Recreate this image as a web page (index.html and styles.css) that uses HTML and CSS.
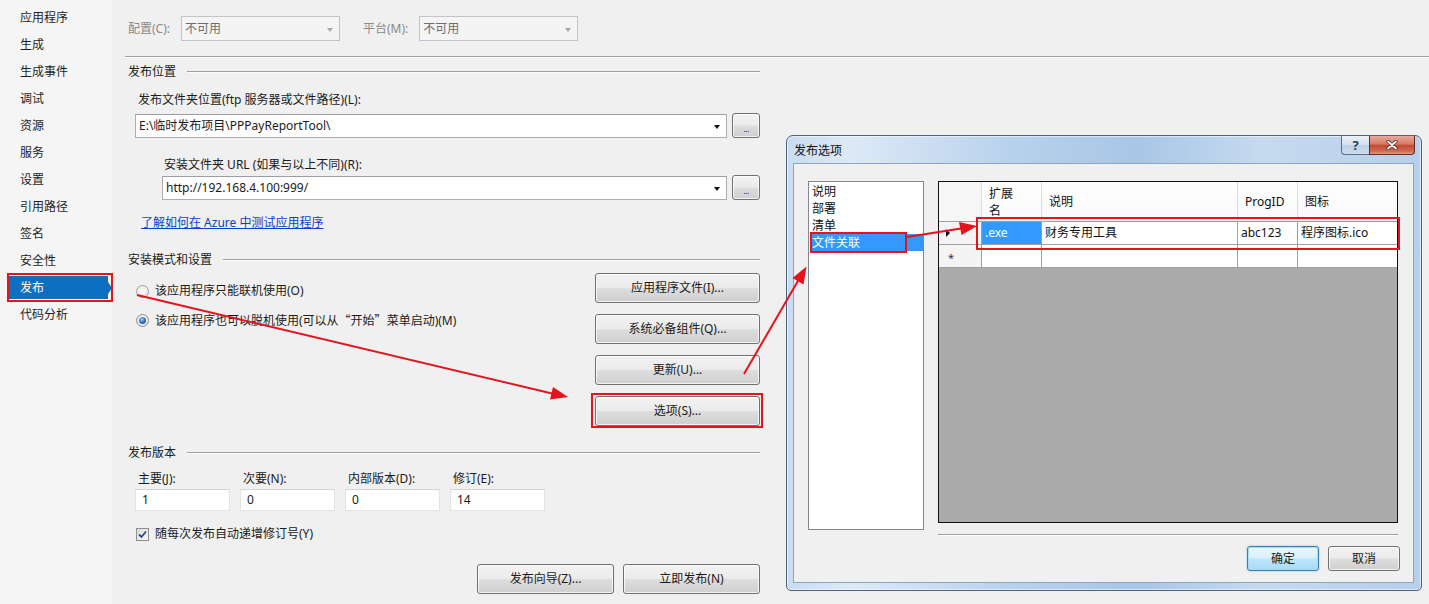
FILE: index.html
```html
<!DOCTYPE html>
<html lang="zh-CN">
<head>
<meta charset="utf-8">
<title>发布</title>
<link rel="stylesheet" href="styles.css">
</head>
<body>
<div class="page">
  <nav class="sidebar">
    <div class="nav-item">应用程序</div>
    <div class="nav-item">生成</div>
    <div class="nav-item">生成事件</div>
    <div class="nav-item">调试</div>
    <div class="nav-item">资源</div>
    <div class="nav-item">服务</div>
    <div class="nav-item">设置</div>
    <div class="nav-item">引用路径</div>
    <div class="nav-item">签名</div>
    <div class="nav-item">安全性</div>
    <div class="nav-item active">发布</div>
    <div class="nav-item">代码分析</div>
  </nav>

  <main class="main">
    <div class="toolbar">
      <span class="tb-label">配置(C):</span>
      <div class="combo combo-disabled tb-combo"><span class="combo-text">不可用</span><span class="caret"></span></div>
      <span class="tb-label tb-label-2">平台(M):</span>
      <div class="combo combo-disabled tb-combo"><span class="combo-text">不可用</span><span class="caret"></span></div>
    </div>
    <div class="etched"></div>

    <div class="content">
      <div class="group-head head-location"><span>发布位置</span><i class="group-line"></i></div>
      <div class="field-label label-folder">发布文件夹位置(ftp 服务器或文件路径)(L):</div>
      <div class="path-row row-folder">
        <div class="combo path-combo"><span class="combo-text">E:\临时发布项目\PPPayReportTool\</span><span class="caret"></span></div>
        <div class="btn btn-browse">...</div>
      </div>
      <div class="field-label label-url">安装文件夹 URL (如果与以上不同)(R):</div>
      <div class="path-row row-url">
        <div class="combo path-combo"><span class="combo-text">http://192.168.4.100:999/</span><span class="caret"></span></div>
        <div class="btn btn-browse">...</div>
      </div>
      <a class="link">了解如何在 Azure 中测试应用程序</a>

      <div class="group-head head-install"><span>安装模式和设置</span><i class="group-line"></i></div>
      <div class="install">
        <div class="radios">
          <div class="radio-row"><span class="radio"></span><span>该应用程序只能联机使用(O)</span></div>
          <div class="radio-row"><span class="radio checked"></span><span>该应用程序也可以脱机使用(可以从<span class="cjk">“开始”</span>菜单启动)(M)</span></div>
        </div>
        <div class="side-buttons">
          <div class="btn btn-side">应用程序文件(I)...</div>
          <div class="btn btn-side">系统必备组件(Q)...</div>
          <div class="btn btn-side">更新(U)...</div>
          <div class="btn btn-side">选项(S)...</div>
        </div>
      </div>

      <div class="group-head head-version"><span>发布版本</span><i class="group-line"></i></div>
      <div class="versions">
        <div class="ver-col"><span class="ver-label">主要(J):</span><div class="textbox">1</div></div>
        <div class="ver-col"><span class="ver-label">次要(N):</span><div class="textbox">0</div></div>
        <div class="ver-col"><span class="ver-label">内部版本(D):</span><div class="textbox">0</div></div>
        <div class="ver-col"><span class="ver-label">修订(E):</span><div class="textbox">14</div></div>
      </div>
      <div class="check-row">
        <span class="checkbox"><svg viewBox="0 0 9 9" width="9" height="9"><path d="M1 4.5 L3.5 7 L8 1.5" fill="none" stroke="#2c4a85" stroke-width="1.8"/></svg></span>
        <span>随每次发布自动递增修订号(Y)</span>
      </div>
      <div class="bottom-buttons">
        <div class="btn btn-bottom">发布向导(Z)...</div>
        <div class="btn btn-bottom">立即发布(N)</div>
      </div>
    </div>
  </main>

  <div class="dialog">
    <div class="dlg-title">
      <span class="dlg-caption">发布选项</span>
      <div class="dlg-ctrls">
        <span class="cap-btn cap-help">?</span>
        <span class="cap-btn cap-close"><svg viewBox="0 0 12 10" width="12" height="10"><path d="M2 1.5 L10 8.5 M10 1.5 L2 8.5" stroke="#4a2a28" stroke-width="3.4" stroke-linecap="round"/><path d="M2 1.5 L10 8.5 M10 1.5 L2 8.5" stroke="#ffffff" stroke-width="1.8" stroke-linecap="round"/></svg></span>
      </div>
    </div>
    <div class="dlg-client">
      <ul class="cat-list">
        <li>说明</li>
        <li>部署</li>
        <li>清单</li>
        <li class="selected">文件关联</li>
      </ul>
      <div class="dlg-right">
        <div class="grid">
          <div class="gh gh-corner"></div>
          <div class="gh">扩展<br>名</div>
          <div class="gh">说明</div>
          <div class="gh">ProgID</div>
          <div class="gh gh-last">图标</div>

          <div class="rh"><span class="row-arrow"></span></div>
          <div class="gc gc-selected">.exe</div>
          <div class="gc">财务专用工具</div>
          <div class="gc">abc123</div>
          <div class="gc gc-last">程序图标.ico</div>

          <div class="rh"><span class="row-star">*</span></div>
          <div class="gc"></div>
          <div class="gc"></div>
          <div class="gc"></div>
          <div class="gc gc-last"></div>
        </div>
        <div class="dlg-sep"></div>
        <div class="dlg-buttons">
          <div class="btn btn-dlg btn-default">确定</div>
          <div class="btn btn-dlg">取消</div>
        </div>
      </div>
    </div>
  </div>

  <svg class="annotations" width="1429" height="604" viewBox="0 0 1429 604">
    <g fill="none" stroke="#e5131d" stroke-width="2">
      <rect x="8" y="274" width="104" height="27"/>
      <rect x="592" y="394" width="170" height="33"/>
      <rect x="811" y="233" width="95" height="19"/>
      <rect x="977" y="218" width="422" height="31"/>
      <line x1="137" y1="295" x2="552" y2="393.5"/>
      <line x1="744" y1="374" x2="798.5" y2="280"/>
      <line x1="907" y1="237" x2="961" y2="228.4"/>
    </g>
    <g fill="#e5131d">
      <polygon points="568,397 550,399.5 553,387"/>
      <polygon points="806.5,266.5 803.5,284.5 792.5,278"/>
      <polygon points="977,226 961.5,235 959,222"/>
    </g>
  </svg>
</div>
</body>
</html>
```

FILE: styles.css
```css
* { box-sizing: border-box; margin: 0; padding: 0; }
html, body { width: 1429px; height: 604px; overflow: hidden; }
body {
  font-family: "Noto Sans", "Noto Sans CJK SC", sans-serif;
  font-size: 12px;
  line-height: 16px;
  color: #1b1b1b;
  background: #f0f0f0;
}
.page { position: relative; display: flex; width: 1429px; height: 604px; }
.cjk { font-family: "Noto Sans CJK SC", sans-serif; }

/* ---------- sidebar ---------- */
.sidebar { width: 112px; flex: none; background: #f5f5f5; padding-top: 6px; }
.nav-item {
  position: relative;
  width: 99px; height: 23px; line-height: 23px;
  margin: 0 0 4px 9px; padding-left: 11px;
  color: #1e1e1e;
}
.nav-item.active { background: #0d6fc2; color: #fff; }
.nav-item.active::after {
  content: ""; position: absolute; right: -4px; top: 6px;
  border-left: 4px solid #0d6fc2; border-top: 6px solid transparent; border-bottom: 6px solid transparent;
}

/* ---------- main ---------- */
.main { flex: 1; display: flex; flex-direction: column; }
.toolbar { display: flex; align-items: center; padding: 16px 0 0 16px; height: 41px; }
.tb-label { color: #8a8a8a; margin-right: 11px; }
.tb-label-2 { margin-left: 23px; }
.tb-combo { width: 159px; height: 25px; }

.combo {
  position: relative; display: flex; align-items: center;
  background: #fff; border: 1px solid #abadb3; border-top-color: #9a9ea6;
  padding-left: 3px;
}
.combo-disabled { background: #f4f4f4; border-color: #c2c4c6; }
.combo-disabled .combo-text { color: #6d6d6d; }
.combo-text { white-space: nowrap; }
.caret {
  position: absolute; right: 6px; top: 50%; margin-top: -1px;
  border-top: 4px solid #111; border-left: 3.5px solid transparent; border-right: 3.5px solid transparent;
}
.combo-disabled .caret { border-top-color: #a8a8a8; }

.etched { height: 2px; margin: 15px 0 0 13px; border-top: 1px solid #a0a0a0; border-bottom: 1px solid #fff; }

.content { width: 632px; margin-left: 16px; display: flex; flex-direction: column; }

.group-head { display: flex; align-items: center; height: 16px; }
.group-line { flex: 1; margin-left: 11px; height: 2px; border-top: 1px solid #a0a0a0; border-bottom: 1px solid #fcfcfc; }
.head-location { margin-top: 6px; }
.head-install { margin-top: 21px; }
.head-version { margin-top: 19px; }

.field-label { height: 16px; }
.label-folder { margin: 12px 0 0 10px; }
.label-url { margin: 19px 0 0 36px; }

.path-row { display: flex; align-items: center; gap: 5px; height: 25px; }
.row-folder { margin: 5px 0 0 7px; }
.row-url { margin: 2px 0 0 34px; }
.path-combo { flex: 1; height: 24px; }

.btn {
  display: flex; align-items: center; justify-content: center;
  border: 1px solid #707070; border-radius: 3px;
  background: linear-gradient(#f2f2f2 0%, #ebebeb 48%, #dddddd 52%, #cfcfcf 100%);
  box-shadow: inset 0 0 0 1px rgba(255,255,255,0.75);
  color: #1b1b1b; white-space: nowrap;
}
.btn-browse { width: 28px; height: 25px; font-size: 9px; line-height: 9px; padding-top: 5px; letter-spacing: -0.5px; color: #333; }

.link { margin: 15px 0 0 13px; height: 16px; color: #0a3fd0; text-decoration: underline; }

.install { display: flex; margin-top: 5px; }
.radios { flex: 1; display: flex; flex-direction: column; gap: 13px; padding: 10px 0 0 8px; }
.radio-row { display: flex; align-items: center; height: 16px; gap: 6px; }
.radio {
  position: relative; flex: none; width: 13px; height: 13px; border-radius: 50%;
  border: 1px solid #a2a3a4;
  background: radial-gradient(circle at 50% 45%, #ffffff 0%, #ededed 55%, #d6d6d6 100%);
}
.radio.checked { border-color: #8e8f8f; }
.radio.checked::after {
  content: ""; position: absolute; left: 2px; top: 2px; width: 7px; height: 7px; border-radius: 50%;
  background: radial-gradient(circle at 40% 35%, #a8d4f6 0%, #3a78bf 45%, #173f73 100%);
}
.side-buttons { width: 165px; display: flex; flex-direction: column; gap: 11px; }
.btn-side { height: 30px; }

.versions { display: flex; gap: 10px; margin: 10px 0 0 7px; }
.ver-col { width: 95px; display: flex; flex-direction: column; }
.ver-label { height: 16px; padding-left: 3px; }
.textbox {
  margin-top: 2px; height: 22px; line-height: 20px; padding-left: 6px;
  background: #fff; border: 1px solid #e3e3e3; border-top-color: #d4d4d4;
}

.check-row { display: flex; align-items: center; gap: 6px; height: 16px; margin: 15px 0 0 8px; }
.checkbox {
  flex: none; width: 13px; height: 13px; border: 1px solid #8e8f8f;
  background: linear-gradient(135deg, #dcdcdc, #f8f8f8);
  display: flex; align-items: center; justify-content: center;
}

.bottom-buttons { display: flex; justify-content: flex-end; gap: 9px; margin-top: 22px; }
.btn-bottom { width: 137px; height: 30px; }

/* ---------- dialog (window over the page) ---------- */
.dialog {
  position: absolute; left: 786px; top: 135px; width: 636px; height: 456px; z-index: 5;
  border: 1px solid #4b6180; border-radius: 7px 7px 5px 5px;
  background: linear-gradient(90deg, #c9dcf0 0%, #dde9f6 10%, #b9d2ec 35%, #a8c6e6 55%, #c6daef 75%, #b7cfea 100%);
  box-shadow: inset 0 0 0 1px rgba(255,255,255,0.55);
  padding: 0 7px 7px 6px;
  display: flex; flex-direction: column;
}
.dlg-title { height: 27px; display: flex; align-items: flex-start; position: relative; }
.dlg-caption { padding: 7px 0 0 1px; color: #111; }
.dlg-ctrls { position: absolute; right: -1px; top: 0; display: flex; }
.cap-btn { height: 19px; display: flex; align-items: center; justify-content: center; border: 1px solid #5b6f89; border-top: none; }
.cap-help {
  width: 28px; border-radius: 0 0 0 4px; border-right: none;
  background: linear-gradient(#e9f0f8, #d3e0ef 50%, #bcd0e6 51%, #cddcee);
  color: #2f3e52; font-size: 13px; font-weight: bold;
}
.cap-close {
  width: 46px; border-radius: 0 0 4px 0; border-color: #6b2a22;
  background: linear-gradient(#e8a99a 0%, #d67a66 45%, #c14a33 52%, #d26a52 85%, #e39a84 100%);
}

.dlg-client {
  flex: 1; display: flex; background: #f0f0f0;
  border: 1px solid #8ea5c2;
  padding: 17px 15px 0 14px;
}
.cat-list {
  list-style: none; width: 116px; height: 349px; flex: none;
  background: #fff; border: 1px solid #828790; padding-top: 1px;
}
.cat-list li { height: 17px; line-height: 17px; margin-left: 2px; padding-left: 1px; color: #111; }
.cat-list li.selected { background: #3399ff; color: #fff; }

.dlg-right { width: 460px; margin-left: 14px; display: flex; flex-direction: column; }
.grid {
  height: 342px; border: 1px solid #101010; background: #ababab;
  display: grid; grid-template-columns: 43px 60px 196px 60px 99px;
  grid-template-rows: 40px 23px 23px; align-content: start;
}
.gh {
  background: linear-gradient(#ffffff, #f7f8fa);
  border-right: 1px solid #dadcdf; border-bottom: 1px solid #a0a0a0;
  display: flex; align-items: center; padding-left: 7px; line-height: 17px; overflow: hidden;
  color: #111;
}
.gh-corner { background: #f6f6f6; }
.gh-last { border-right: none; }
.rh {
  background: #f4f4f4; border-right: 1px solid #a0a0a0; border-bottom: 1px solid #a0a0a0;
  display: flex; align-items: center; padding-left: 7px;
}
.row-arrow { width: 0; height: 0; border-left: 4px solid #111; border-top: 4px solid transparent; border-bottom: 4px solid transparent; }
.row-star { font-size: 11px; color: #333; padding-left: 2px; padding-top: 3px; }
.gc {
  background: #fff; border-right: 1px solid #a0a0a0; border-bottom: 1px solid #a0a0a0;
  display: flex; align-items: center; padding-left: 3px; white-space: nowrap; color: #111;
}
.gc-last { border-right: none; }
.gc-selected { background: #3399ff; color: #fff; }

.dlg-sep { margin-top: 11px; height: 2px; border-top: 1px solid #a0a0a0; border-bottom: 1px solid #fff; }
.dlg-buttons { display: flex; justify-content: flex-end; gap: 9px; margin: 10px -2px 0 0; }
.btn-dlg { width: 72px; height: 25px; }
.btn-default {
  border-color: #3c7fb1;
  background: linear-gradient(#eaf6fd 0%, #d9f0fc 48%, #bee6fd 52%, #a7d9f5 100%);
  box-shadow: inset 0 0 0 1px #a6dcf6, 0 0 2px #7ac0e8;
}

/* ---------- annotation overlay ---------- */
.annotations { position: absolute; left: 0; top: 0; z-index: 10; pointer-events: none; }
```
